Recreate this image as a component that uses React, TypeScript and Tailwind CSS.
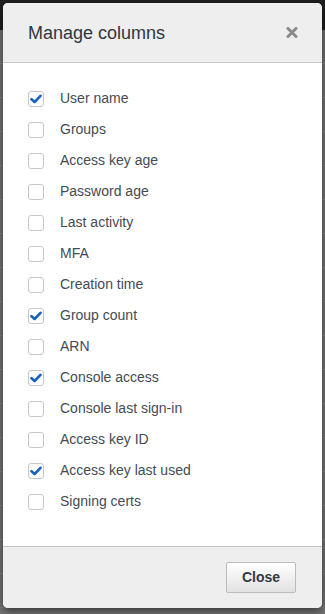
import { useState } from 'react';

const columns = [
    { id: 'userName', label: 'User name', checked: true },
    { id: 'groups', label: 'Groups', checked: false },
    { id: 'accessKeyAge', label: 'Access key age', checked: false },
    { id: 'passwordAge', label: 'Password age', checked: false },
    { id: 'lastActivity', label: 'Last activity', checked: false },
    { id: 'mfa', label: 'MFA', checked: false },
    { id: 'creationTime', label: 'Creation time', checked: false },
    { id: 'groupCount', label: 'Group count', checked: true },
    { id: 'arn', label: 'ARN', checked: false },
    { id: 'consoleAccess', label: 'Console access', checked: true },
    { id: 'consoleLastSignIn', label: 'Console last sign-in', checked: false },
    { id: 'accessKeyId', label: 'Access key ID', checked: false },
    { id: 'accessKeyLastUsed', label: 'Access key last used', checked: true },
    { id: 'signingCerts', label: 'Signing certs', checked: false }
];

function Checkbox({ checked }: { checked: boolean }) {
    return (
        <span className="w-4 h-4 rounded-[3px] border border-[#c6c6c6] bg-white flex items-center justify-center shrink-0">
            {checked && (
                <svg width="12" height="10" viewBox="0 0 12 10">
                    <path d="M1.5 5.2 L4.6 8 L10.5 1.8" fill="none" stroke="#1a62c0" strokeWidth="2.6" strokeLinecap="round" strokeLinejoin="round" />
                </svg>
            )}
        </span>
    );
}

export default function App() {
    const [items] = useState(columns);

    return (
        <div className="relative w-[325px] h-[614px] overflow-hidden bg-[#747474] font-['Liberation_Sans',Arial,sans-serif]">
            {/* backdrop page */}
            <div className="h-[30px] bg-[#1f1f1f]" />
            <div className="flex flex-col">
                {Array.from({ length: 18 }).map((_, i) => (
                    <div key={i} className="h-[34px] border-b border-[#858585]" />
                ))}
            </div>

            {/* modal */}
            <div className="absolute left-[3px] top-[3px] w-[319px] h-[605px] flex flex-col bg-white rounded-[5px] overflow-hidden shadow-[0_3px_8px_rgba(0,0,0,0.55)]">
                <div className="h-[60px] shrink-0 bg-[#eeeeee] border-b border-[#c8c8c8] flex items-center justify-between pl-[25px] pr-[24px]">
                    <h2 className="text-[18px] text-[#2e3640] leading-none">Manage columns</h2>
                    <svg width="12" height="11" viewBox="0 0 12 11">
                        <path d="M2 1.5 L10 9.5 M10 1.5 L2 9.5" stroke="#8a8a8a" strokeWidth="3" strokeLinecap="round" />
                    </svg>
                </div>

                <div className="flex-1 pt-[20px] pl-[25px]">
                    {items.map((c) => (
                        <label key={c.id} className="h-[31px] flex items-center gap-4">
                            <Checkbox checked={c.checked} />
                            <span className="text-[14px] text-[#444b55]">{c.label}</span>
                        </label>
                    ))}
                </div>

                <div className="h-[62px] shrink-0 bg-[#eeeeee] border-t border-[#c8c8c8] flex items-center justify-end pr-[26px]">
                    <button className="h-[31px] w-[70px] border border-[#bcbcbc] rounded-[2px] bg-gradient-to-b from-white to-[#e2e2e2] text-[14px] font-bold text-[#333a44]">
                        Close
                    </button>
                </div>
            </div>
        </div>
    );
}
